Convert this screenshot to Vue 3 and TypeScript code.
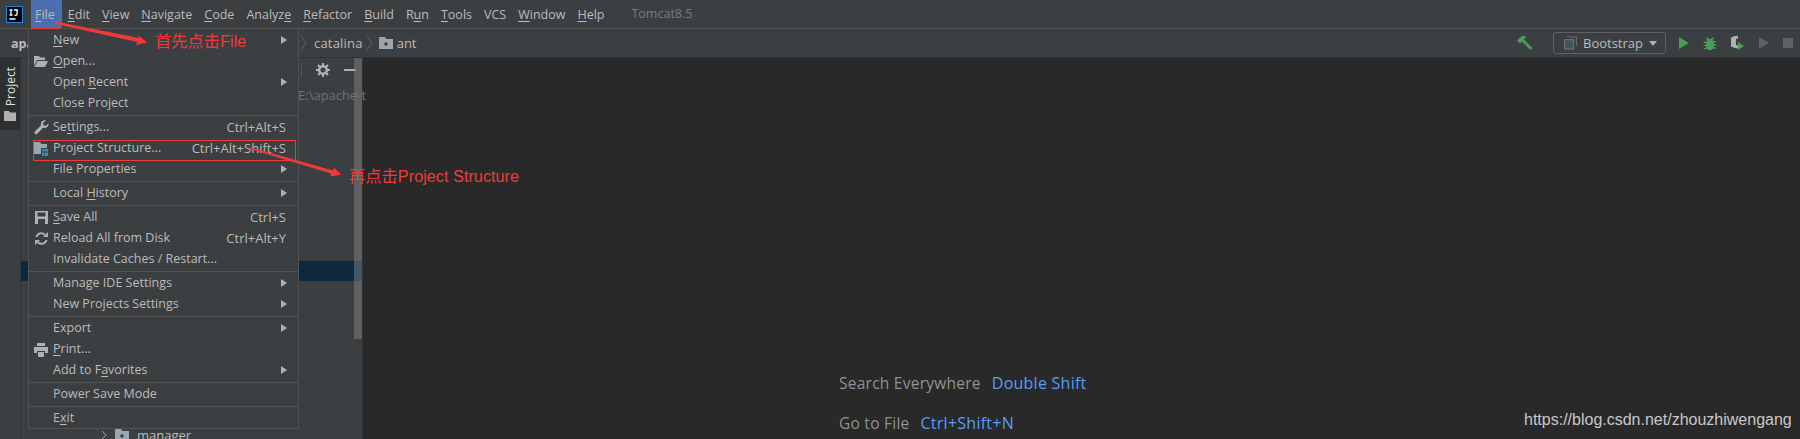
<template>
  <div class="ide">
    <header class="menubar">
      <svg class="logo" width="17" height="17" viewBox="0 0 17 17">
        <rect x="0.5" y="0.5" width="16" height="16" fill="#000" stroke="#1e88e5" />
        <path d="M3.5 4h3M5 4v5M3.5 9h3M8 4h4M11 4v4.5q0 .8-1 .8H8.500M3.500 13h6" stroke="#fff" fill="none" stroke-width="1.300" />
      </svg>
      <div class="menus">
        <span v-for="m in topMenus" :key="m.label" class="top-item" :class="{ active: m.label === 'File' }"><template v-if="m.at >= 0">{{ m.label.slice(0, m.at) }}<u>{{ m.label[m.at] }}</u>{{ m.label.slice(m.at + 1) }}</template><template v-else>{{ m.label }}</template></span>
      </div>
      <span class="project-title">Tomcat8.5</span>
    </header>

    <div class="navbar">
      <b class="crumb-root">apa</b>
      <div class="crumbs">
        <svg class="chev" width="7" height="16" viewBox="0 0 7 16"><path d="M1 1l5 7-5 7" fill="none" stroke="#5e6163" /></svg>
        <span class="crumb-name">catalina</span>
        <svg class="chev" width="7" height="16" viewBox="0 0 7 16"><path d="M1 1l5 7-5 7" fill="none" stroke="#5e6163" /></svg>
        <svg width="14" height="12" viewBox="0 0 14 12"><path d="M0 0h6l1.500 2H14v10H0z" fill="#9aa7b0" /><circle cx="7" cy="7" r="1.800" fill="#3c3f41" /></svg>
        <span class="crumb-leaf">ant</span>
      </div>
      <div class="toolbar">
        <svg width="16" height="16" viewBox="0 0 16 16"><path d="M0 5.500L5 1h3l1 1L7 4.500 15.500 13l-2 2L5 6.500l-2 2z" fill="#499c54" /></svg>
        <div class="run-combo">
          <svg width="14" height="14" viewBox="0 0 14 14"><path d="M3 .5h10.500V10" fill="none" stroke="#6e7173" /><rect x="0.500" y="3.500" width="10" height="10" fill="#3f5560" stroke="#7a7d7f" /></svg>
          <span>Bootstrap</span>
          <i class="caret"></i>
        </div>
        <svg width="12" height="14" viewBox="0 0 12 14"><path d="M1 1l10 6-10 6z" fill="#499c54" /></svg>
        <svg width="14" height="15" viewBox="0 0 14 15"><path d="M4 1l2 2h2l2-2 1 1-1.500 1.800c.6.400 1 .9 1.200 1.400L13 5v1.500h-2v1.700h2.500v1.300H11v1.500l2 1v1.300l-2.500-1.100C9.700 13.600 8.400 14 7 14s-2.700-.4-3.500-1.300L1 13.800v-1.300l2-1V10H.5V8.700H3V7H1V5.500l2.300.2c.2-.6.600-1 1.200-1.400L3 2.500z" fill="#499c54" /></svg>
        <svg width="15" height="16" viewBox="0 0 15 16"><path d="M1 2.500L5 1h3v3L6 3.500v7L8 10v3.500L5 13l-4-1.500z" fill="#afb1b3" /><path d="M8 7l6 4-6 4z" fill="#499c54" /></svg>
        <svg width="12" height="14" viewBox="0 0 12 14"><path d="M1 1l10 6-10 6z" fill="#5f6264" /></svg>
        <i class="stop"></i>
      </div>
    </div>

    <div class="workspace">
      <aside class="stripe">
        <div class="stripe-tab">
          <svg width="12" height="10" viewBox="0 0 12 10"><path d="M0 0h5l1 1.500h6V10H0z" fill="#afb1b3" /></svg>
          <span>Project</span>
        </div>
      </aside>

      <section class="project-panel">
        <div class="panel-head">
          <i class="head-sep"></i>
          <svg width="14" height="14" viewBox="0 0 14 14"><circle cx="7" cy="7" r="3.800" fill="none" stroke="#afb1b3" stroke-width="2.600" /><path d="M7 0v3M7 11v3M0 7h3M11 7h3M2 2l2 2M10 10l2 2M12 2l-2 2M4 10l-2 2" stroke="#afb1b3" stroke-width="2" /></svg>
          <i class="minus"></i>
        </div>
        <div class="path-row">E:\apache-t</div>
        <div class="selected-row"></div>
        <div class="tree-row">
          <svg width="6" height="10" viewBox="0 0 6 10"><path d="M1 1l4 4-4 4" fill="none" stroke="#9a9c9e" /></svg>
          <svg width="14" height="12" viewBox="0 0 14 12"><path d="M0 0h6l1.500 2H14v10H0z" fill="#9aa7b0" /><circle cx="7" cy="7" r="1.800" fill="#3c3f41" /></svg>
          <span>manager</span>
        </div>
        <div class="scroll-thumb"></div>
      </section>

      <main class="editor">
        <p class="hint">Search Everywhere<a>Double Shift</a></p>
        <p class="hint">Go to File<a>Ctrl+Shift+N</a></p>
      </main>
    </div>

    <nav class="file-menu">
      <template v-for="(group, g) in fileMenu" :key="g">
        <hr v-if="g > 0" class="sep" />
        <div v-for="item in group" :key="item.label" class="row">
          <span class="row-icon">
            <svg v-if="item.icon === 'open'" width="16" height="13" viewBox="0 0 16 13"><path d="M1 1h5l1 1.500h5V5H4L1 11z" fill="#afb1b3" /><path d="M4.500 6H15l-3 6H1.500z" fill="#afb1b3" /></svg>
            <svg v-else-if="item.icon === 'wrench'" width="15" height="15" viewBox="0 0 15 15"><path d="M14.500 3.500L11.500 6 9.500 5 9 3l3-2.500C9.500-.3 6.800 1.500 6.800 4.200c0 .6.100 1 .2 1.400L.8 11.600c-.8 1 .2 3.200 2 2.700l6.200-6.500c3 1 6.200-1.300 5.500-4.300z" fill="#afb1b3" /></svg>
            <svg v-else-if="item.icon === 'structure'" width="14" height="14" viewBox="0 0 14 14"><path d="M0 0h6l1.500 2H13v4H7v6H0z" fill="#9aa7b0" /><path d="M8 7h2.500v2.500H8zM11 7h3v2.500h-3zM8 10.500h2.500V14H8zM11 10.500h3V14h-3z" fill="#3592c4" /></svg>
            <svg v-else-if="item.icon === 'save'" width="13" height="13" viewBox="0 0 13 13"><path d="M0 0h13v13H0zM2.500 1.500v4h8v-4zM3 8v5h7V8z" fill="#afb1b3" fill-rule="evenodd" /></svg>
            <svg v-else-if="item.icon === 'reload'" width="13" height="13" viewBox="0 0 13 13"><path d="M1.500 5A5 5 0 0 1 10 2.800M11.500 8A5 5 0 0 1 3 10.200" fill="none" stroke="#afb1b3" stroke-width="2" /><path d="M8 5h5V0zM5 8H0v5z" fill="#afb1b3" /></svg>
            <svg v-else-if="item.icon === 'print'" width="14" height="14" viewBox="0 0 14 14"><path d="M3 0h8v3H3zM0 4h14v6h-3V8H3v2H0zM4 9h6v5H4z" fill="#afb1b3" /></svg>
          </span>
          <span class="row-label"><template v-if="item.at >= 0">{{ item.label.slice(0, item.at) }}<u>{{ item.label[item.at] }}</u>{{ item.label.slice(item.at + 1) }}</template><template v-else>{{ item.label }}</template></span>
          <span v-if="item.keys" class="row-keys">{{ item.keys }}</span>
          <i v-if="item.sub" class="row-arrow"></i>
        </div>
      </template>
    </nav>

    <svg class="marks" width="1800" height="439" viewBox="0 0 1800 439">
      <rect x="31.500" y="3.500" width="28" height="25" fill="none" stroke="#f03a3a" />
      <rect x="33.500" y="140.500" width="262" height="20" fill="none" stroke="#f03a3a" />
      <path d="M56 21.500l83 16.500-1-3 9 7.500-11 2.500 1-3-81-18z" fill="#f03a3a" />
      <path d="M250 147l83 23.500 1-3 7 7-10.500 2 .5-3L250 149z" fill="#f03a3a" />
    </svg>
    <span class="note note-file">首先点击File</span>
    <span class="note note-structure">再点击Project Structure</span>
    <span class="watermark">https://blog.csdn.net/zhouzhiwengang</span>
  </div>
</template>

<script setup lang="ts">
interface TopMenu {
  label: string
  at: number
}

interface MenuRow {
  label: string
  at: number
  keys?: string
  sub?: boolean
  icon?: string
}

const topMenus: TopMenu[] = [
  { label: 'File', at: 0 },
  { label: 'Edit', at: 0 },
  { label: 'View', at: 0 },
  { label: 'Navigate', at: 0 },
  { label: 'Code', at: 0 },
  { label: 'Analyze', at: 6 },
  { label: 'Refactor', at: 0 },
  { label: 'Build', at: 0 },
  { label: 'Run', at: 1 },
  { label: 'Tools', at: 0 },
  { label: 'VCS', at: -1 },
  { label: 'Window', at: 0 },
  { label: 'Help', at: 0 },
]

const fileMenu: MenuRow[][] = [
  [
    { label: 'New', at: 0, sub: true },
    { label: 'Open...', at: 0, icon: 'open' },
    { label: 'Open Recent', at: 5, sub: true },
    { label: 'Close Project', at: -1 },
  ],
  [
    { label: 'Settings...', at: 2, keys: 'Ctrl+Alt+S', icon: 'wrench' },
    { label: 'Project Structure...', at: -1, keys: 'Ctrl+Alt+Shift+S', icon: 'structure' },
    { label: 'File Properties', at: -1, sub: true },
  ],
  [{ label: 'Local History', at: 6, sub: true }],
  [
    { label: 'Save All', at: 0, keys: 'Ctrl+S', icon: 'save' },
    { label: 'Reload All from Disk', at: -1, keys: 'Ctrl+Alt+Y', icon: 'reload' },
    { label: 'Invalidate Caches / Restart...', at: -1 },
  ],
  [
    { label: 'Manage IDE Settings', at: -1, sub: true },
    { label: 'New Projects Settings', at: -1, sub: true },
  ],
  [
    { label: 'Export', at: -1, sub: true },
    { label: 'Print...', at: 0, icon: 'print' },
    { label: 'Add to Favorites', at: 8, sub: true },
  ],
  [{ label: 'Power Save Mode', at: -1 }],
  [{ label: 'Exit', at: 1 }],
]
</script>

<style>
html,
body {
  margin: 0;
  background: #292929;
}
</style>

<style scoped>
.ide {
  position: relative;
  width: 1800px;
  height: 439px;
  overflow: hidden;
  display: flex;
  flex-direction: column;
  background: #292929;
  color: #bbbbbb;
  font-family: "Open Sans", "Noto Sans", sans-serif;
  font-size: 12.500px;
}

u {
  text-underline-offset: 2px;
}

.menubar {
  height: 28px;
  flex: none;
  display: flex;
  align-items: center;
  background: #3c3f41;
  border-bottom: 1px solid #555759;
  padding-left: 6px;
}

.logo {
  flex: none;
}

.menus {
  display: flex;
  margin-left: 8px;
  height: 100%;
}

.top-item {
  display: flex;
  align-items: center;
  padding: 0 6px;
  white-space: pre;
}

.top-item.active {
  padding: 0 7px 0 4px;
  background: #4b6eaf;
}

.project-title {
  margin-left: 21px;
  margin-top: -2px;
  color: #787a7c;
}

.navbar {
  height: 28px;
  flex: none;
  display: flex;
  align-items: center;
  background: #3c3f41;
  border-bottom: 1px solid #323232;
}

.crumb-root {
  width: 19px;
  margin-left: 11px;
  white-space: nowrap;
}

.crumbs {
  display: flex;
  align-items: center;
  gap: 6px;
  margin-left: 270px;
}

.crumb-name {
  margin-left: 1px;
  margin-right: -3px;
  font-size: 13px;
  letter-spacing: 0.2px;
}

.crumb-leaf {
  margin-left: -2px;
  font-size: 13px;
}

.toolbar {
  margin-left: auto;
  display: flex;
  align-items: center;
  gap: 13px;
  padding-right: 7px;
  font-size: 13px;
}

.run-combo {
  width: 113px;
  height: 22px;
  box-sizing: border-box;
  margin: 0 -1px 0 7px;
  display: flex;
  align-items: center;
  gap: 6px;
  padding: 0 8px 0 10px;
  border: 1px solid #5e6163;
  border-radius: 3px;
}

.caret {
  margin-left: auto;
  border-left: 4px solid transparent;
  border-right: 4px solid transparent;
  border-top: 5px solid #afb1b3;
}

.stop {
  width: 10px;
  height: 10px;
  background: #5f6264;
}

.workspace {
  flex: 1;
  min-height: 0;
  display: flex;
}

.stripe {
  width: 20px;
  flex: none;
  background: #3c3f41;
  border-right: 1px solid #323232;
}

.stripe-tab {
  height: 72px;
  display: flex;
  flex-direction: column;
  align-items: center;
  justify-content: flex-end;
  gap: 5px;
  padding-bottom: 9px;
  box-sizing: border-box;
  background: #2d2f30;
  color: #e0e0e0;
  font-size: 12px;
}

.stripe-tab span {
  order: -1;
  writing-mode: vertical-rl;
  transform: rotate(180deg);
}

.project-panel {
  position: relative;
  width: 341px;
  flex: none;
  background: #3c3f41;
  border-right: 1px solid #323232;
}

.panel-head {
  height: 24px;
  display: flex;
  align-items: center;
  justify-content: flex-end;
  gap: 14px;
  padding-right: 6px;
}

.head-sep {
  width: 1px;
  height: 14px;
  background: #555759;
}

.minus {
  width: 12px;
  height: 2px;
  background: #afb1b3;
}

.path-row {
  margin-top: 4px;
  padding-left: 277px;
  white-space: nowrap;
  font-size: 13px;
  color: #6f7173;
}

.selected-row {
  height: 20px;
  margin-top: 157px;
  background: #0d293e;
}

.tree-row {
  display: flex;
  align-items: center;
  gap: 8px;
  margin-top: 145px;
  padding-left: 80px;
  font-size: 13px;
}

.scroll-thumb {
  position: absolute;
  top: 0;
  right: 0;
  width: 8px;
  height: 281px;
  background: rgba(120, 122, 124, 0.55);
}

.editor {
  flex: 1;
  display: flex;
  flex-direction: column;
  justify-content: flex-end;
  gap: 20px;
  padding: 0 0 6px 476px;
}

.hint {
  margin: 0;
  height: 20px;
  line-height: 20px;
  font-size: 15.500px;
  letter-spacing: 0.25px;
  color: #8f9193;
  white-space: pre;
}

.hint a {
  margin-left: 11px;
  font-size: 16px;
  color: #589df6;
}

.file-menu {
  position: absolute;
  left: 28px;
  top: 28px;
  width: 271px;
  height: 401px;
  box-sizing: border-box;
  padding-top: 1px;
  background: #3c3f41;
  border: 1px solid #515151;
}

.sep {
  margin: 1px 0;
  height: 1px;
  border: 0;
  background: #515151;
}

.row {
  position: relative;
  height: 21px;
  box-sizing: border-box;
  display: flex;
  align-items: center;
  padding: 0 12px 2px 24px;
  white-space: pre;
}

.row-icon {
  position: absolute;
  left: 4px;
  top: 0;
  width: 16px;
  height: 21px;
  display: flex;
  align-items: center;
  justify-content: center;
}

.row-keys {
  margin-left: auto;
  font-size: 13px;
}

.row-arrow {
  margin-left: auto;
  margin-right: -1px;
  border-top: 4px solid transparent;
  border-bottom: 4px solid transparent;
  border-left: 6px solid #afb1b3;
}

.marks {
  position: absolute;
  left: 0;
  top: 0;
  pointer-events: none;
}

.note {
  position: absolute;
  color: #f03a3a;
  font-family: "Liberation Sans", "Noto Sans CJK SC", sans-serif;
  font-size: 16.300px;
  line-height: 20px;
  white-space: nowrap;
}

.note-file {
  left: 155px;
  top: 31px;
}

.note-structure {
  left: 349px;
  top: 166px;
}

.watermark {
  position: absolute;
  left: 1524px;
  top: 410px;
  font-family: "Liberation Sans", sans-serif;
  font-size: 16px;
  line-height: 20px;
  color: #c8c8c8;
}
</style>
